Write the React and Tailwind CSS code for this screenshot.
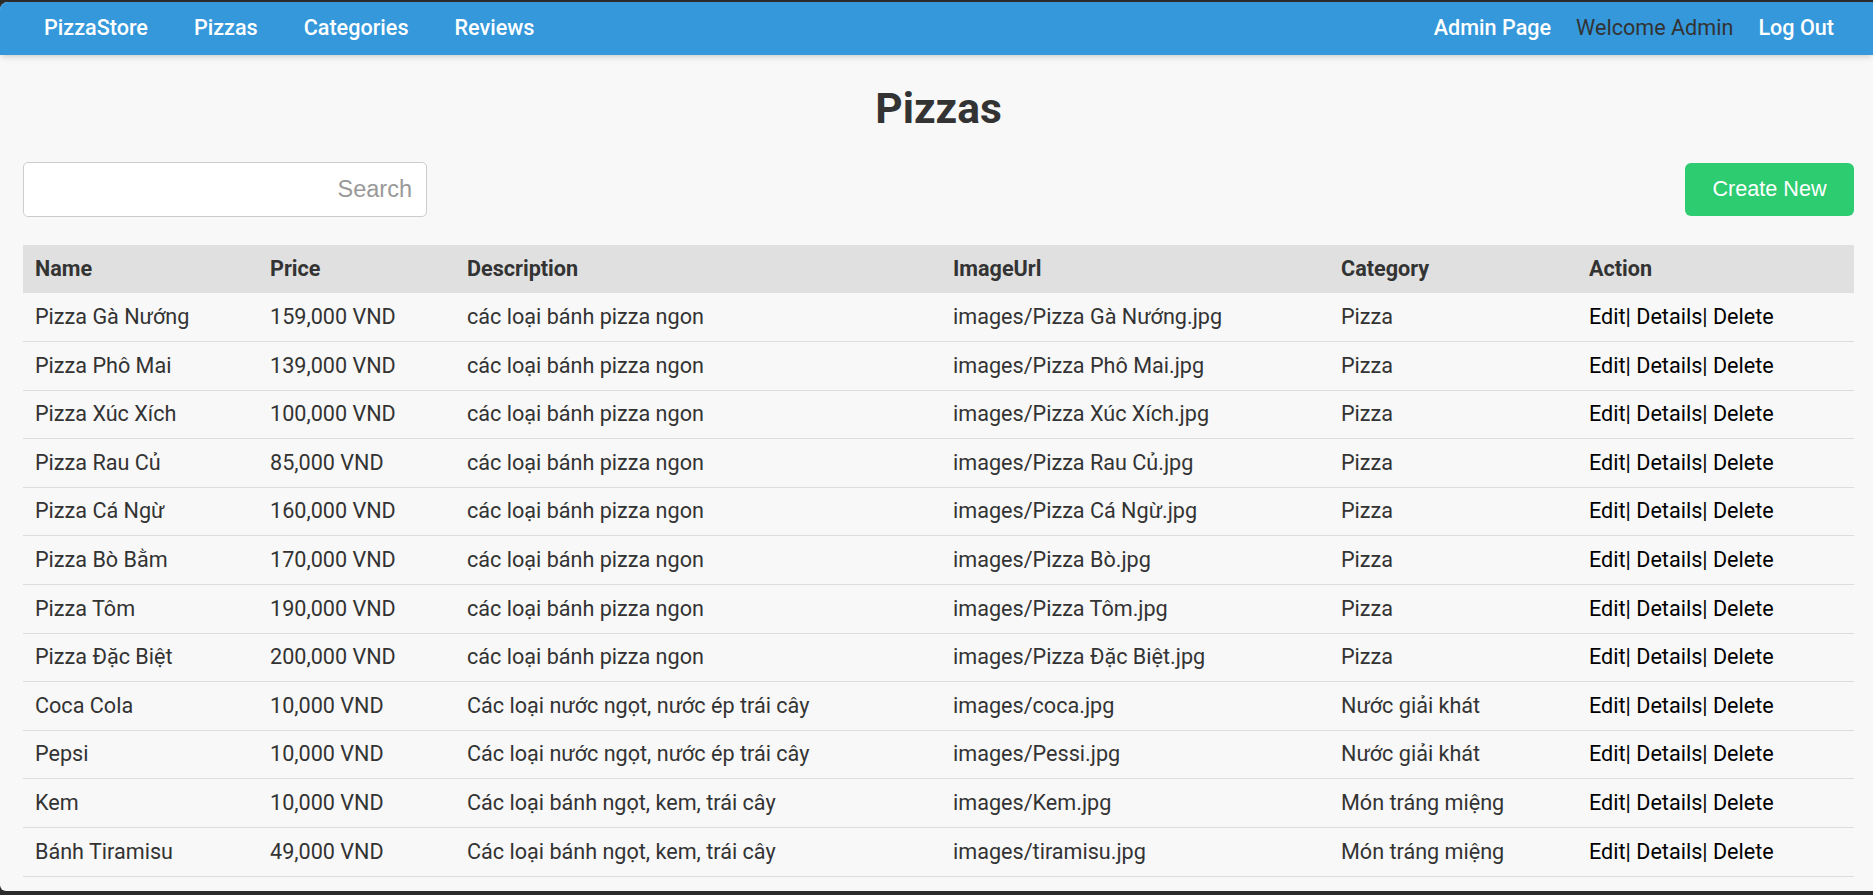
import React from 'react'

const PIZZAS = [
  ['Pizza Gà Nướng', '159,000 VND', 'các loại bánh pizza ngon', 'images/Pizza Gà Nướng.jpg', 'Pizza'],
  ['Pizza Phô Mai', '139,000 VND', 'các loại bánh pizza ngon', 'images/Pizza Phô Mai.jpg', 'Pizza'],
  ['Pizza Xúc Xích', '100,000 VND', 'các loại bánh pizza ngon', 'images/Pizza Xúc Xích.jpg', 'Pizza'],
  ['Pizza Rau Củ', '85,000 VND', 'các loại bánh pizza ngon', 'images/Pizza Rau Củ.jpg', 'Pizza'],
  ['Pizza Cá Ngừ', '160,000 VND', 'các loại bánh pizza ngon', 'images/Pizza Cá Ngừ.jpg', 'Pizza'],
  ['Pizza Bò Bằm', '170,000 VND', 'các loại bánh pizza ngon', 'images/Pizza Bò.jpg', 'Pizza'],
  ['Pizza Tôm', '190,000 VND', 'các loại bánh pizza ngon', 'images/Pizza Tôm.jpg', 'Pizza'],
  ['Pizza Đặc Biệt', '200,000 VND', 'các loại bánh pizza ngon', 'images/Pizza Đặc Biệt.jpg', 'Pizza'],
  ['Coca Cola', '10,000 VND', 'Các loại nước ngọt, nước ép trái cây', 'images/coca.jpg', 'Nước giải khát'],
  ['Pepsi', '10,000 VND', 'Các loại nước ngọt, nước ép trái cây', 'images/Pessi.jpg', 'Nước giải khát'],
  ['Kem', '10,000 VND', 'Các loại bánh ngọt, kem, trái cây', 'images/Kem.jpg', 'Món tráng miệng'],
  ['Bánh Tiramisu', '49,000 VND', 'Các loại bánh ngọt, kem, trái cây', 'images/tiramisu.jpg', 'Món tráng miệng'],
]

const HEADERS = ['Name', 'Price', 'Description', 'ImageUrl', 'Category', 'Action']

function Navbar() {
  return (
    <nav className="relative z-10 flex h-[53px] items-center justify-between bg-[#3498db] pl-[44px] pr-[39px] text-[21.6px] font-medium text-white shadow-md">
      <div className="flex items-center gap-[46px]">
        <a href="#">PizzaStore</a>
        <a href="#">Pizzas</a>
        <a href="#">Categories</a>
        <a href="#">Reviews</a>
      </div>
      <div className="flex items-center gap-[25px]">
        <a href="#">Admin Page</a>
        <span className="font-normal text-[#333]">Welcome Admin</span>
        <a href="#">Log Out</a>
      </div>
    </nav>
  )
}

export default function App() {
  return (
    <div className="h-screen bg-[#2b2b2b] pb-[4px] pt-[2px] font-['Roboto',sans-serif]">
      <div className="h-full overflow-hidden rounded-bl-[6px] rounded-tl-[8px] bg-[#f8f8f8] text-[#333]">
        <Navbar />
        <main className="pl-[23px] pr-[19px]">
          <h1 className="mt-[30px] text-center text-[42.5px] font-bold leading-[48px]">Pizzas</h1>

          <div className="mt-[29px] flex items-center justify-between">
            <input
              type="text"
              placeholder="Search"
              className="h-[55px] w-[404px] rounded-[5px] border border-[#ccc] bg-white pr-[14px] text-right font-['Liberation_Sans',sans-serif] text-[23.5px] outline-none placeholder:text-[#999]"
            />
            <button className="h-[53px] w-[169px] rounded-[6px] bg-[#2ecc71] font-['Liberation_Sans',sans-serif] text-[21.6px] text-white">
              Create New
            </button>
          </div>

          <table className="mt-[28px] w-full table-fixed border-collapse text-left text-[21.6px]">
            <colgroup>
              <col className="w-[235px]" />
              <col className="w-[197px]" />
              <col className="w-[486px]" />
              <col className="w-[388px]" />
              <col className="w-[248px]" />
              <col />
            </colgroup>
            <thead>
              <tr className="h-[48px] bg-[#e0e0e0]">
                {HEADERS.map((h) => (
                  <th key={h} className="px-[12px] font-bold">
                    {h}
                  </th>
                ))}
              </tr>
            </thead>
            <tbody>
              {PIZZAS.map((row) => (
                <tr key={row[0]} className="h-[48.6px] border-b border-[#ddd]">
                  {row.map((cell, i) => (
                    <td key={i} className="whitespace-nowrap px-[12px]">
                      {cell}
                    </td>
                  ))}
                  <td className="whitespace-nowrap px-[12px] text-black">
                    <a href="#">Edit</a>| <a href="#">Details</a>| <a href="#">Delete</a>
                  </td>
                </tr>
              ))}
            </tbody>
          </table>
        </main>
      </div>
    </div>
  )
}
